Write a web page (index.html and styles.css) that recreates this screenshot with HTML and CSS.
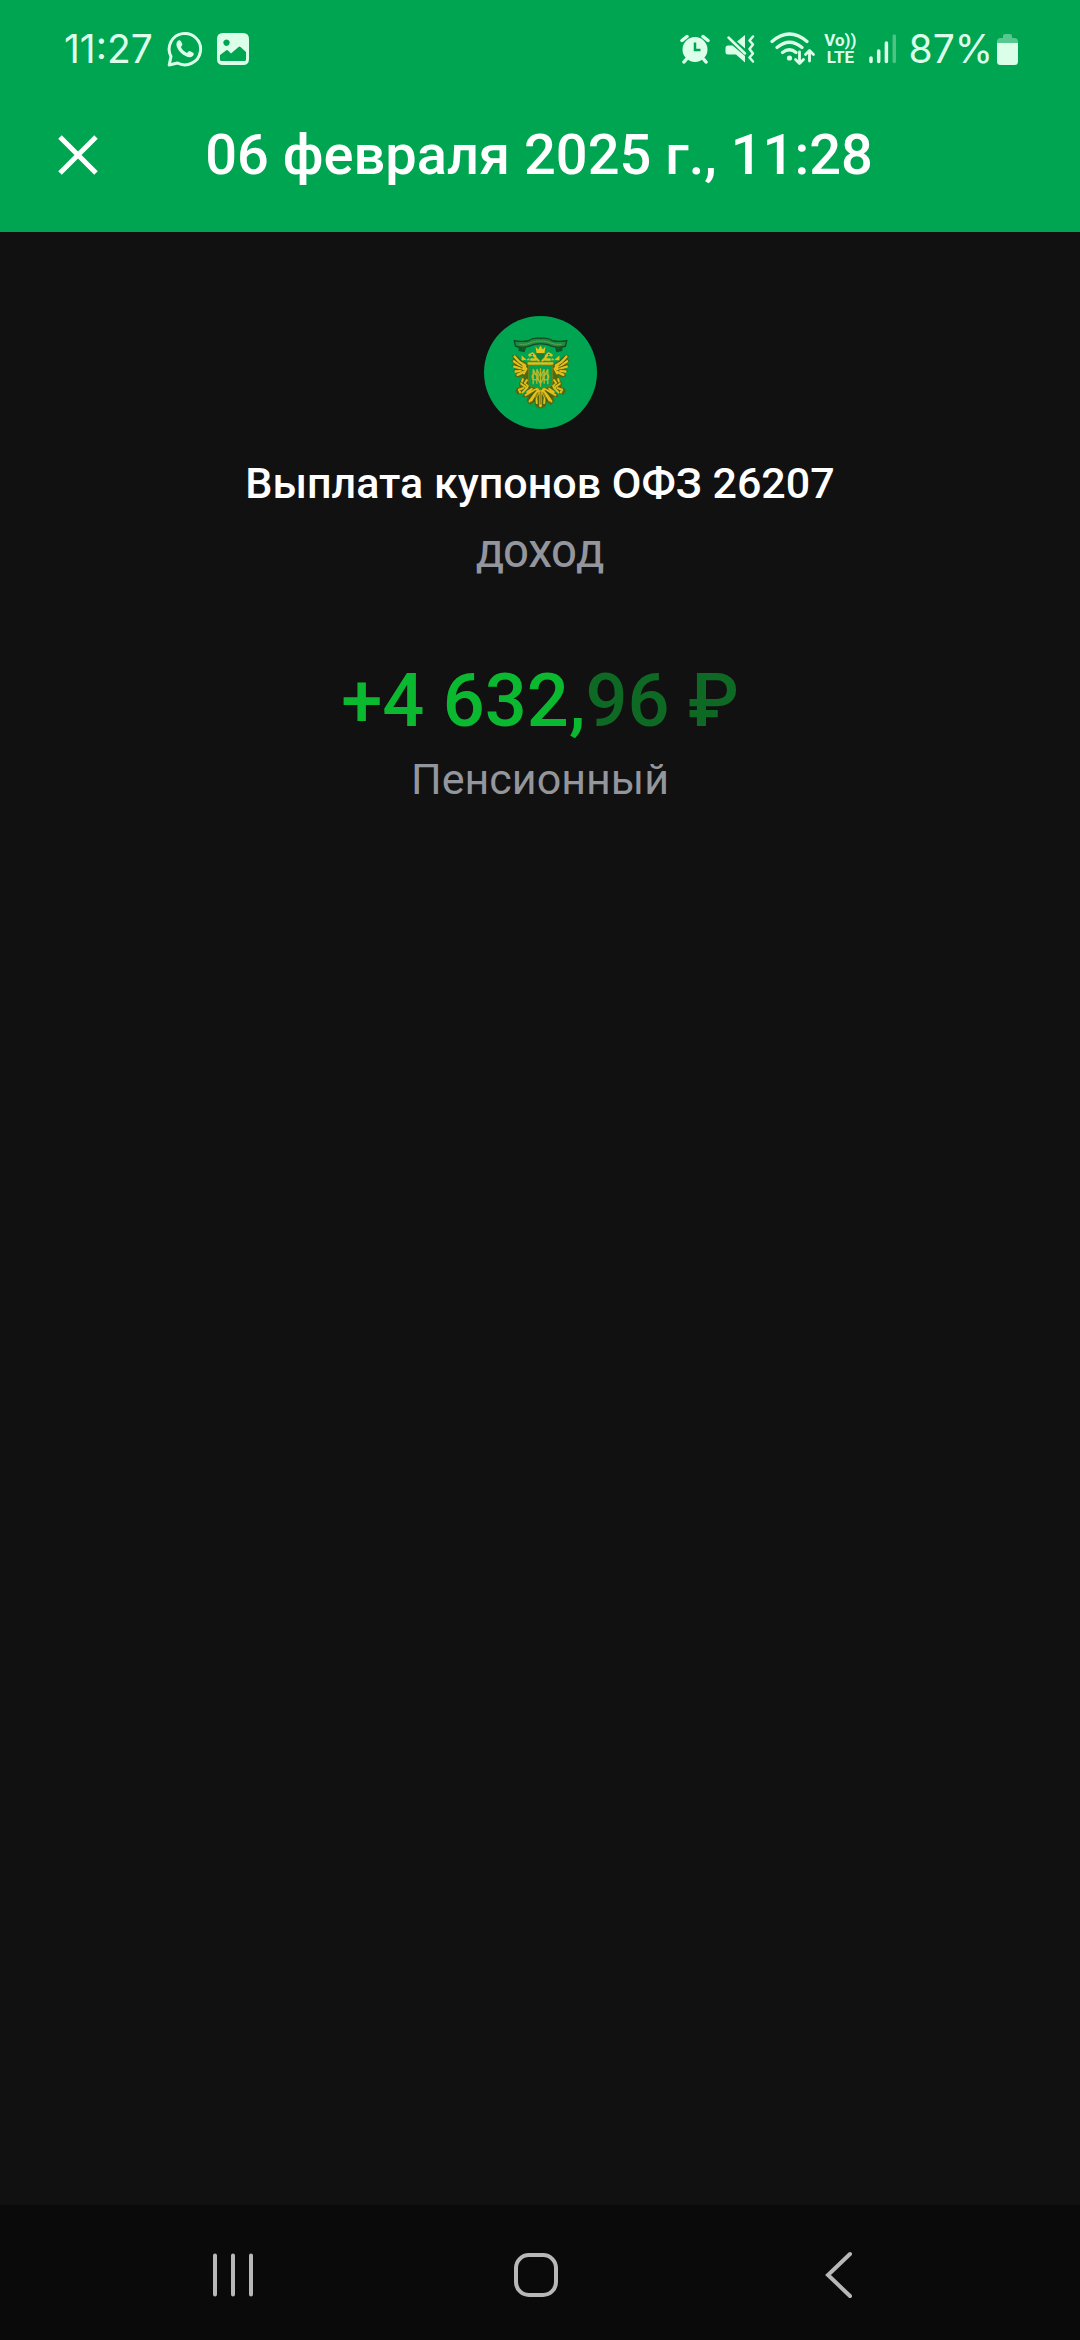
FILE: index.html
```html
<!DOCTYPE html>
<html lang="ru">
<head>
<meta charset="utf-8">
<meta name="viewport" content="width=device-width, initial-scale=1">
<title>Выплата купонов ОФЗ 26207</title>
<link rel="stylesheet" href="styles.css">
</head>
<body>
<header class="header">
  <div class="status">
    <div class="status-group status-left">
      <span class="clock">11:27</span>
      <svg class="icon-whatsapp" width="36" height="36" viewBox="0 0 36 36" aria-hidden="true">
        <path d="M2.2 34 4 25.500A15.700 15.700 0 1 1 10.500 32Z" fill="none" stroke="currentColor" stroke-width="3" stroke-linejoin="round"/>
        <path d="M10.500 10.200c1.300-1.300 2.500-1.500 3.300-.1l1.500 3c.5 1-.9 2-1.400 3 1.300 2.700 3.300 4.700 6 5.800 1-.6 1.800-2.300 2.900-1.900l3.300 1.700c1.200.7.8 2.100-.4 3.300-1.600 1.500-3.900 1.500-6.600.3-4-1.800-7.100-4.800-8.800-8.600-1.200-2.500-1.200-5 .2-6.500Z" fill="currentColor"/>
      </svg>
      <svg class="icon-image" width="32" height="32" viewBox="0 0 32 32" aria-hidden="true">
        <path fill-rule="evenodd" fill="currentColor" d="M6 0H26Q32 0 32 6V26Q32 32 26 32H6Q0 32 0 26V6Q0 0 6 0ZM3 22V26.500Q3 28 4.500 28H27.500Q29 28 29 26.500V19L23.500 14Q22.500 13.200 21.500 14L14 20.500 11 17.500Q10 16.700 9 17.500ZM9.500 6.500a3.200 3.200 0 1 0 .01 0Z"/>
      </svg>
    </div>
    <div class="status-group status-right">
      <svg class="icon-alarm" width="30" height="30" viewBox="0 0 30 30" aria-hidden="true">
        <path d="M2 6.500 7 2.500M28 6.500 23 2.500M6.500 25 4 28M23.500 25 26 28" stroke="currentColor" stroke-width="3.500" stroke-linecap="round"/>
        <circle cx="15" cy="15.500" r="12.500" fill="currentColor"/>
        <path d="M15 8.500V16H20.500" fill="none" stroke="#00a551" stroke-width="2.500"/>
      </svg>
      <svg class="icon-mute" width="30" height="30" viewBox="0 0 30 30" aria-hidden="true">
        <path d="M3 11.500H7.500L20 22V28.500L11 20.500H3Q.5 20.500 .5 18V14Q.5 11.500 3 11.500ZM12 7.500 20 1V14.500Z" fill="currentColor"/>
        <path d="M3.500 3.500 20 19.500" stroke="currentColor" stroke-width="2.500" stroke-linecap="round"/>
        <path d="M28 2.500 24.500 6.500 28 10.500 24.500 15 28 19.500 24.500 23.500 28 27.500" fill="none" stroke="currentColor" stroke-width="2.500" stroke-linecap="round" stroke-linejoin="round"/>
      </svg>
      <svg class="icon-wifi" width="46" height="34" viewBox="0 0 46 34" aria-hidden="true">
        <g fill="none" stroke="currentColor" stroke-width="3.200" stroke-linecap="round" stroke-linejoin="round">
          <path d="M2 9.500Q19.500-5.500 37 9.500M7 15.500Q19.500 5 32 15.500M12.500 20.500Q19.500 15 26 20.500"/>
          <path stroke-width="2.800" d="M29.500 20V31M25.500 27.500 29.500 31.500 33.500 27.500M39.500 29V19M35.500 22.500 39.500 18.500 43.500 22.500"/>
        </g>
        <circle cx="19.500" cy="26" r="2.600" fill="currentColor"/>
      </svg>
      <span class="volte"><span>Vo))</span><span>LTE</span></span>
      <svg class="icon-signal" width="28" height="30" viewBox="0 0 28 30" aria-hidden="true">
        <g stroke="currentColor" stroke-width="3.500" stroke-linecap="round">
          <path d="M2 24V27.500M9.700 17V27.500M17.400 9V27.500"/>
          <path d="M25.300 2V27.500" opacity=".35"/>
        </g>
      </svg>
      <span class="battery-level">87%</span>
      <svg class="icon-battery" width="21" height="31" viewBox="0 0 21 31" aria-hidden="true">
        <path d="M0 9V7.500Q0 4 3.500 4H6V2Q6 0 8 0H13Q15 0 15 2V4H17.500Q21 4 21 7.500V9Z" fill="currentColor" opacity=".4"/>
        <path d="M0 9H21V27.500Q21 31 17.500 31H3.500Q0 31 0 27.500Z" fill="currentColor"/>
      </svg>
    </div>
  </div>
  <div class="titlebar">
    <button class="close" type="button" aria-label="Закрыть">
      <svg width="40" height="40" viewBox="0 0 40 40" aria-hidden="true"><path d="M2 2 38 38M38 2 2 38" stroke="currentColor" stroke-width="5"/></svg>
    </button>
    <h1 class="title">06 февраля 2025 г., 11:28</h1>
  </div>
</header>
<main class="content">
  <svg class="emblem" viewBox="38 47 340 340" role="img" aria-label="ОФЗ">
    <circle cx="208" cy="217" r="170" fill="#00a551"/>
    <defs>
      <g id="eagle-half">
        <path d="M206 190 170 190 150 182 134 163 122 166 127 178 119 180 128 191 121 197 132 205 124 213 137 217 130 228 144 232 155 227 150 238 143 250 146 263 136 264 132 273 139 284 153 280 164 272 178 266 168 276 158 281 154 291 170 291 166 303 176 315 190 305 192 318 206 327Z" fill="#55670f"/>
        <g fill="none" stroke="#e3bf1b" stroke-linecap="round" stroke-linejoin="round">
          <path stroke-width="7" d="M130 169 144 185 162 196M128 183 145 195 163 203M129 199 146 204 160 207M133 214 148 211M139 224 158 215M172 190H206"/>
          <path stroke-width="6" d="M166 206 158 220M155 237 150 251 162 260M167 240 160 250 170 258M156 264 143 269 147 277M168 262 154 277"/>
          <path stroke-width="6" d="M202 264 183 273 163 285M201 270 187 286 175 304M204 274 195 291 197 309M207 272V318M182 266 168 276M194 279 181 301"/>
          <path stroke-width="8" d="M202 180 192 169 184 160 175 165M194 178 181 178"/>
        </g>
        <path d="M165 180 176 171 172 177 186 180ZM151 166 166 179 151 181Z" fill="#e3bf1b"/>
        <path d="M137 168 154 186M130 179 154 198M132 194 154 203M136 209 153 207M149 245 165 256M193 270 174 292M201 277 188 305M207 274V313" fill="none" stroke="#39470b" stroke-width="2"/>
        <circle cx="183" cy="163" r="2" fill="#173d16"/>
        <path d="M142 140 155 145 165 140 160 156 142 152Z" fill="#125426"/>
      </g>
    </defs>
    <use href="#eagle-half"/>
    <use href="#eagle-half" transform="translate(416 0) scale(-1 1)"/>
    <path d="M129 121Q150 126 173 121 184 112 208 114 232 112 243 121 266 126 287 121L283 138Q260 145 239 137 226 130 208 131 190 130 177 137 156 145 133 138Z" fill="#1f8a45" stroke="#124a24" stroke-width="4"/>
    <path d="M145 132Q164 134 180 127 208 118 236 127 252 134 272 132" fill="none" stroke="#9bb52d" stroke-width="3" stroke-dasharray="3 2"/>
    <path d="M193 139 201 148 208 136 215 148 223 139 220 158H196Z" fill="#e6c51c"/>
    <path d="M197 161H219V171L208 182 197 171Z" fill="#078943" stroke="#36731e" stroke-width="2"/>
    <path d="M172 196H244V249Q244 258 233 260L216 263 208 269 200 263 183 260Q172 258 172 249Z" fill="#04a14e" stroke="#6e8118" stroke-width="3"/>
    <g fill="none" stroke="#bdb629" stroke-width="4">
      <path d="M186 252V207L208 251 230 207V252M208 204V260M197 251V207L208 230 219 207V251"/>
      <circle cx="192" cy="230" r="9"/><circle cx="224" cy="230" r="9"/>
    </g>
  </svg>
  <h2 class="name">Выплата купонов ОФЗ 26207</h2>
  <p class="kind">ДОХОД</p>
  <p class="amount">+4 632,<span class="amount-minor">96 ₽</span></p>
  <p class="account">Пенсионный</p>
</main>
<nav class="navbar" aria-label="Системная навигация">
  <button type="button" aria-label="Недавние">
    <svg width="48" height="48" viewBox="0 0 48 48" aria-hidden="true"><path d="M6 4.500V43.500M24 4.500V43.500M42 4.500V43.500" stroke="currentColor" stroke-width="4" stroke-linecap="round"/></svg>
  </button>
  <button type="button" aria-label="Главный экран">
    <svg width="48" height="48" viewBox="0 0 48 48" aria-hidden="true"><rect x="4" y="4" width="40" height="40" rx="13" fill="none" stroke="currentColor" stroke-width="4"/></svg>
  </button>
  <button type="button" aria-label="Назад">
    <svg width="48" height="48" viewBox="0 0 48 48" aria-hidden="true"><path d="M35 3 13 24 35 45" fill="none" stroke="currentColor" stroke-width="4" stroke-linecap="round"/></svg>
  </button>
</nav>
</body>
</html>
```
FILE: styles.css
```css
* {
  box-sizing: border-box;
}

body {
  display: flex;
  flex-direction: column;
  min-height: 100vh;
  margin: 0;
  background: #111;
  color: #fff;
  font-family: Roboto, "Noto Sans", sans-serif;
}

h1,
h2,
p {
  margin: 0;
}

button {
  display: flex;
  align-items: center;
  justify-content: center;
  padding: 0;
  border: 0;
  background: none;
  color: inherit;
}

svg {
  display: block;
  flex: none;
}

.header {
  background: #00a551;
}

.status {
  display: flex;
  justify-content: space-between;
  height: 98px;
  padding: 0 62px 0 64px;
  color: #dcffea;
  font-family: Inter, Roboto, sans-serif;
}

.status-group {
  display: flex;
  align-items: center;
}

.status-left {
  gap: 14px;
}

.status-right {
  gap: 12px;
}

.icon-alarm,
.icon-mute {
  margin-right: 3px;
}

.volte {
  margin-left: -4px;
}

.icon-battery {
  margin-left: -8px;
}

.clock,
.battery-level {
  font-size: 39px;
  line-height: 48px;
}

.volte {
  display: flex;
  flex-direction: column;
  align-items: center;
  font-family: Roboto, sans-serif;
  font-size: 17px;
  font-weight: 700;
  line-height: 17px;
}

.titlebar {
  display: grid;
  grid-template-columns: 1fr auto 1fr;
  align-items: center;
  height: 134px;
  padding: 0 60px 20px 58px;
}

.close {
  justify-self: start;
}

.title {
  font-size: 56px;
  font-weight: 500;
  line-height: 66px;
}

.content {
  display: flex;
  flex: 1;
  flex-direction: column;
  align-items: center;
  padding: 84px 32px;
  text-align: center;
}

.emblem {
  width: 113px;
  height: 113px;
  margin-bottom: 28px;
}

.name {
  font-size: 43px;
  font-weight: 500;
  line-height: 52px;
}

.kind {
  margin-top: 24px;
  color: #94969d;
  font-size: 37px;
  font-weight: 500;
  line-height: 44px;
}

.amount {
  margin-top: 80px;
  color: #0ab92f;
  font-size: 74px;
  font-weight: 500;
  line-height: 88px;
}

.amount-minor {
  color: #0e6925;
}

.account {
  margin-top: 8px;
  color: #94969d;
  font-size: 43px;
  line-height: 52px;
}

.navbar {
  display: flex;
  align-items: center;
  justify-content: space-around;
  height: 135px;
  padding: 4px 90px 0 82px;
  background: #0a0a0a;
  color: #b8b8b8;
}
```
